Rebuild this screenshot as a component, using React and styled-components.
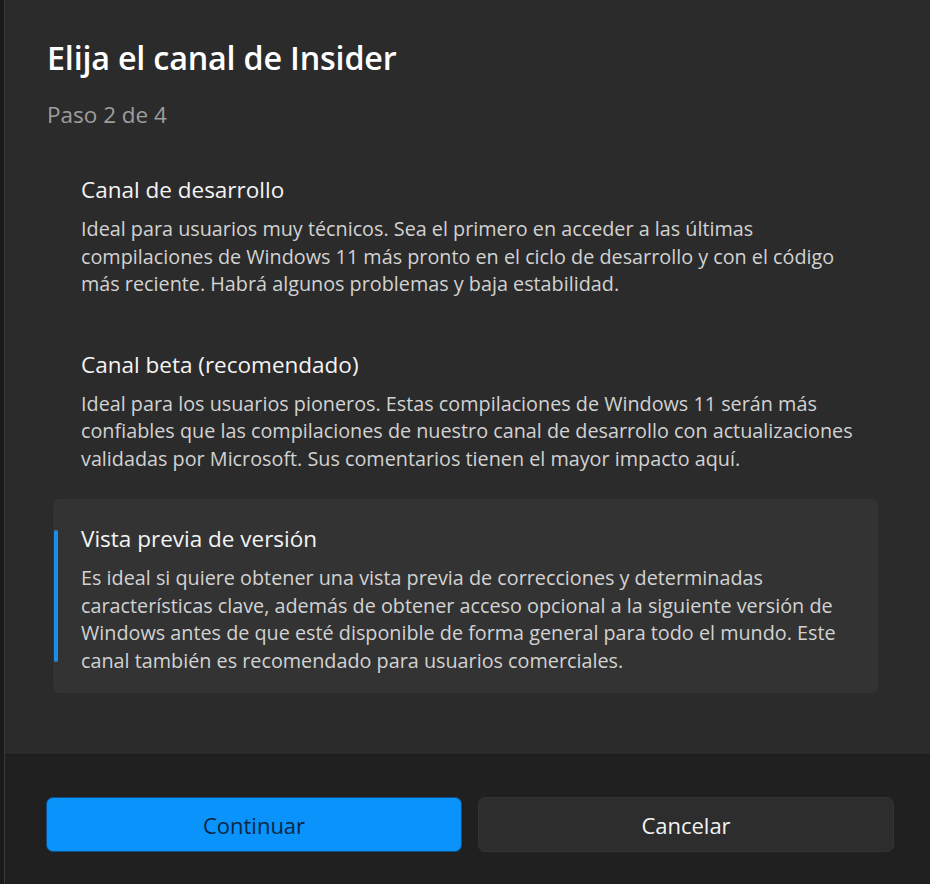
import React from 'react'
import styled, { createGlobalStyle } from 'styled-components'

const GlobalStyle = createGlobalStyle`
  html, body {
    margin: 0;
    padding: 0;
    background: #1b1b1b;
  }
  body {
    font-family: "Open Sans", "Noto Sans", sans-serif;
    -webkit-font-smoothing: antialiased;
  }
`;

const channels = [
  {
    id: 'dev',
    title: 'Canal de desarrollo',
    lines: [
      'Ideal para usuarios muy técnicos. Sea el primero en acceder a las últimas',
      'compilaciones de Windows 11 más pronto en el ciclo de desarrollo y con el código',
      'más reciente. Habrá algunos problemas y baja estabilidad.',
    ],
  },
  {
    id: 'beta',
    title: 'Canal beta (recomendado)',
    lines: [
      'Ideal para los usuarios pioneros. Estas compilaciones de Windows 11 serán más',
      'confiables que las compilaciones de nuestro canal de desarrollo con actualizaciones',
      'validadas por Microsoft. Sus comentarios tienen el mayor impacto aquí.',
    ],
  },
  {
    id: 'release',
    title: 'Vista previa de versión',
    lines: [
      'Es ideal si quiere obtener una vista previa de correcciones y determinadas',
      'características clave, además de obtener acceso opcional a la siguiente versión de',
      'Windows antes de que esté disponible de forma general para todo el mundo. Este',
      'canal también es recomendado para usuarios comerciales.',
    ],
  },
]

function App() {
  const selected = 'release'

  return (
    <>
      <GlobalStyle />
      <Screen>
        <EdgeStrip />
        <Dialog>
          <Content>
            <Title>Elija el canal de Insider</Title>
            <Step>Paso 2 de 4</Step>
            <Options>
              {channels.map(ch => (
                <Option key={ch.id} $active={ch.id === selected}>
                  <Indicator $active={ch.id === selected} />
                  <OptionText>
                    <OptionTitle>{ch.title}</OptionTitle>
                    <OptionDesc>
                      {ch.lines.map((line, i) => (
                        <Line key={i}>{line}</Line>
                      ))}
                    </OptionDesc>
                  </OptionText>
                </Option>
              ))}
            </Options>
          </Content>
          <Footer>
            <Button $primary>Continuar</Button>
            <Button>Cancelar</Button>
          </Footer>
        </Dialog>
      </Screen>
    </>
  )
}

export default App

const Screen = styled.div`
  display: flex;
  width: 930px;
  height: 884px;
  overflow: hidden;
`;

const EdgeStrip = styled.div`
  width: 4px;
  flex-shrink: 0;
  background: #1a1a1c;
  border-right: 1px solid #3a3a3a;
`;

const Dialog = styled.div`
  flex: 1;
  display: flex;
  flex-direction: column;
  background: #2b2b2b;
`;

const Content = styled.div`
  flex: 1;
  padding: 37px 52px 0 42px;
`;

const Title = styled.h1`
  margin: 0;
  font-size: 32.3px;
  line-height: 40px;
  font-weight: 600;
  color: #ffffff;
  letter-spacing: -0.2px;
`;

const Step = styled.div`
  margin-top: 24px;
  font-size: 22.5px;
  line-height: 28px;
  color: #9d9d9d;
`;

const Options = styled.div`
  display: flex;
  flex-direction: column;
  gap: 8px;
  margin-top: 21px;
  margin-left: 6px;
`;

const Option = styled.div`
  display: flex;
  align-items: center;
  gap: 23px;
  padding: 26px 0 19px 1px;
  border-radius: 6px;
  background: ${props => (props.$active ? '#333333' : 'transparent')};
`;

const Indicator = styled.div`
  align-self: stretch;
  margin: 5px 0 12px;
  width: 4px;
  flex-shrink: 0;
  border-radius: 2px;
  background: ${props => (props.$active ? '#1a8fe9' : 'transparent')};
`;

const OptionText = styled.div`
  display: flex;
  flex-direction: column;
  gap: 11px;
`;

const OptionTitle = styled.div`
  font-size: 22.5px;
  line-height: 28px;
  color: #f4f4f4;
`;

const OptionDesc = styled.div`
  font-size: 19.8px;
  line-height: 27.5px;
  color: #d2d2d2;
`;

const Line = styled.span`
  display: block;
  white-space: nowrap;
`;

const Footer = styled.div`
  display: grid;
  grid-template-columns: 1fr 1fr;
  gap: 16px;
  height: 130px;
  box-sizing: border-box;
  padding: 42px 36px 0 41px;
  background: #202020;
  border-top: 1px solid #1c1c1c;
`;

const Button = styled.button`
  height: 55px;
  border-radius: 7px;
  font-family: inherit;
  font-size: 22px;
  cursor: pointer;
  border: 1px solid ${props => (props.$primary ? '#0d4f8a' : '#333333')};
  background: ${props => (props.$primary ? '#0a93fb' : '#2d2d2d')};
  color: ${props => (props.$primary ? '#0b2744' : '#f2f2f2')};
`;
